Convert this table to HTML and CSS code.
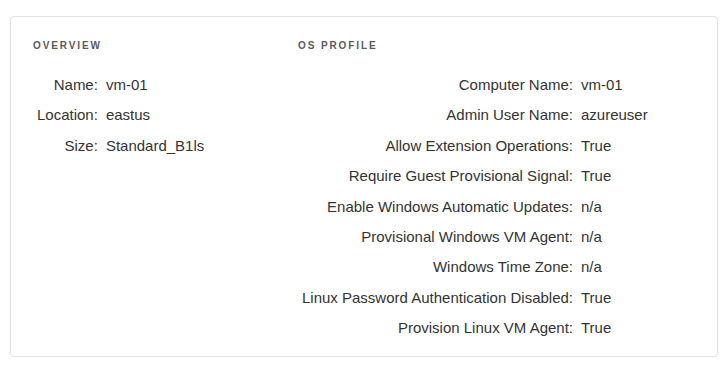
FILE: index.html
```html
<!DOCTYPE html>
<html lang="en">
<head>
  <meta charset="UTF-8">
  <title>VM Details</title>
  <meta name="viewport" content="width=device-width, initial-scale=1">
  <link rel="stylesheet" href="styles.css">
</head>
<body>
  <div class="card">
    <section class="section">
      <h3>Overview</h3>
      <table class="props">
        <tr><td class="key">Name:</td><td class="val">vm-01</td></tr>
        <tr><td class="key">Location:</td><td class="val">eastus</td></tr>
        <tr><td class="key">Size:</td><td class="val">Standard_B1ls</td></tr>
      </table>
    </section>
    <section class="section">
      <h3>OS Profile</h3>
      <table class="props">
        <tr><td class="key">Computer Name:</td><td class="val">vm-01</td></tr>
        <tr><td class="key">Admin User Name:</td><td class="val">azureuser</td></tr>
        <tr><td class="key">Allow Extension Operations:</td><td class="val">True</td></tr>
        <tr><td class="key">Require Guest Provisional Signal:</td><td class="val">True</td></tr>
        <tr><td class="key">Enable Windows Automatic Updates:</td><td class="val">n/a</td></tr>
        <tr><td class="key">Provisional Windows VM Agent:</td><td class="val">n/a</td></tr>
        <tr><td class="key">Windows Time Zone:</td><td class="val">n/a</td></tr>
        <tr><td class="key">Linux Password Authentication Disabled:</td><td class="val">True</td></tr>
        <tr><td class="key">Provision Linux VM Agent:</td><td class="val">True</td></tr>
      </table>
    </section>
  </div>
</body>
</html>
```

FILE: styles.css
```css
:root {
  --text: #333;
  --muted: #5a5a5a;
  --border: #e2e2e2;
}
body {
  font-family: 'Liberation Sans', Arial, sans-serif;
  background: #fff;
  margin: 0;
  padding: 16px 2px 0 10px;
  color: var(--text);
}
.card {
  border: 1px solid var(--border);
  border-radius: 4px;
  box-shadow: 0 1px 2px rgba(0, 0, 0, 0.05);
  padding: 22px 22px 17px 22px;
  display: grid;
  grid-template-columns: 265px 1fr;
  height: 300px;
}
h3 {
  margin: 0 0 17px;
  font-size: 10px;
  font-weight: 700;
  text-transform: uppercase;
  letter-spacing: 1.9px;
  color: var(--muted);
  line-height: 14px;
}
.props {
  border-collapse: collapse;
  font-size: 15px;
}
.props td {
  padding: 5px 4px;
  line-height: 20.4px;
  white-space: nowrap;
}
.props .key {
  text-align: right;
}
.props .val {
  padding-left: 4px;
}
```
